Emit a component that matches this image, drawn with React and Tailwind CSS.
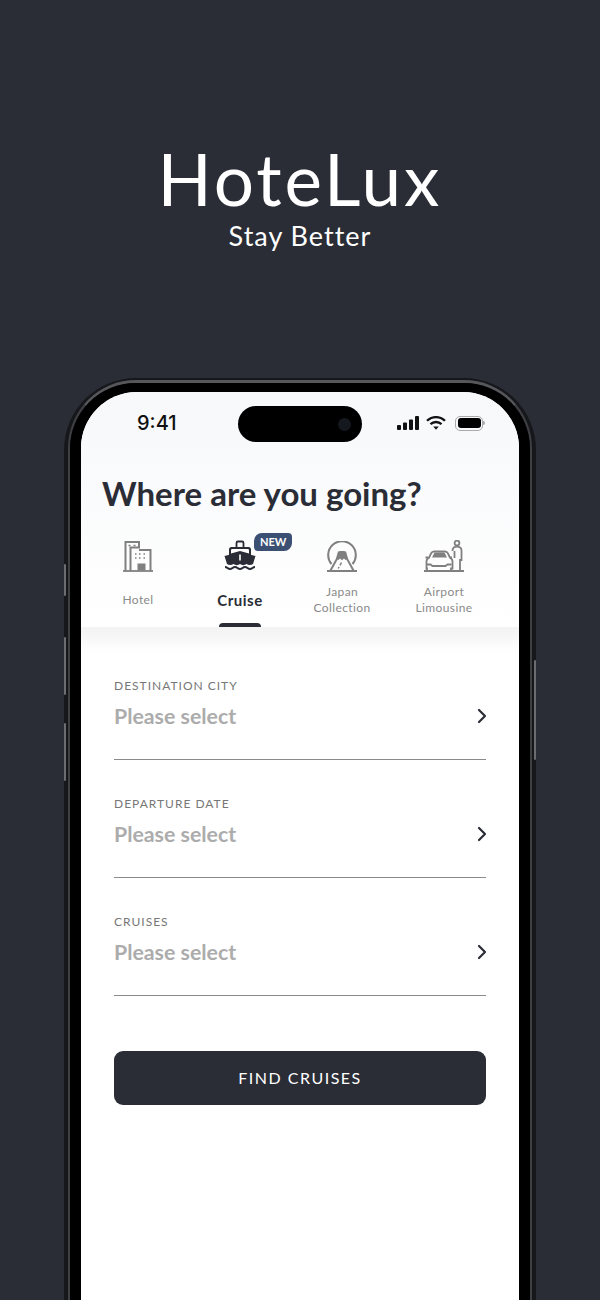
import React from 'react';
import { ChevronRight } from 'lucide-react';

const HotelIcon = () => (
  <svg width="30" height="31" viewBox="0 0 30 31" fill="none" stroke="#808080" strokeWidth="2">
    <path d="M2.500 30V1h13.500v5.500H7.500V30" />
    <path d="M16 9h11.500v21" />
    <path d="M0 30h30" strokeWidth="1.800" />
    <path d="M5.500 4.500h2M10.500 4.500h2M12 13h1.500M16 13h1.500M20.500 13h1.500M12 17h1.500M16 17h1.500M20.500 17h1.500" strokeWidth="1.700" />
    <rect x="14.500" y="22.500" width="8" height="7" fill="#808080" stroke="none" />
  </svg>
);

const CruiseIcon = () => (
  <svg width="32" height="32" viewBox="0 0 32 32" fill="none">
    <path d="M12.500 7V3a1.500 1.500 0 0 1 1.500-1.500h4A1.500 1.500 0 0 1 19.500 3v4" stroke="#2a2d36" strokeWidth="1.800" />
    <path d="M5 16V9.500A2.500 2.500 0 0 1 7.500 7h17A2.500 2.500 0 0 1 27 9.500V16z" fill="#2a2d36" />
    <path d="M7 13.500V10.300a1.300 1.300 0 0 1 1.300-1.300h15.400a1.300 1.300 0 0 1 1.300 1.300v3.200L16 11z" fill="#fff" />
    <path d="M0.500 16 16 12l15.500 4-2.500 8c-2 1.400-4.500 1.400-6.500 0-2 1.500-4.500 1.500-6.500 0-2 1.500-4.500 1.500-6.500 0-2 1.400-4.500 1.400-6.500 0z" fill="#2a2d36" />
    <path d="M16 14.500v6" stroke="#fff" strokeWidth="1.600" />
    <path d="M1 27c2.500 0 2.500 2 5 2S8.500 27 11 27s2.500 2 5 2 2.500-2 5-2 2.500 2 5 2 2.500-2 5-2" stroke="#2a2d36" strokeWidth="2" />
  </svg>
);

const FujiIcon = () => (
  <svg width="30" height="31" viewBox="0 0 30 31" fill="none" stroke="#808080" strokeWidth="2">
    <path d="M4.500 23A13.800 13.800 0 1 1 25.500 23" />
    <path d="M0 30h30" />
    <path d="M3.500 29.500 11 16l1-4a1.500 1.500 0 0 1 1.400-1h3.200a1.500 1.500 0 0 1 1.400 1l1 4 7.500 13.500" />
    <path d="M11 10.500h8l2 7-2.500 1.500-1.500-1.500-2 1.800-2-1.800-1.500 1.500L9 17.500z" fill="#808080" stroke="none" />
    <path d="M14.500 21.500l-1.500 2.800M12 26l-.8 1.500" strokeWidth="1.500" />
  </svg>
);

const LimoIcon = () => (
  <svg width="40" height="32" viewBox="0 0 40 32" fill="none" stroke="#808080" strokeWidth="1.800">
    <path d="M0 31h40" />
    <path d="M3 31v-2.500H2.500V21.500c0-2 1-3 2.500-3.700l2-4.300c.6-1.300 1.500-2 3-2h11c1.500 0 2.400.7 3 2l2 4.300c1.500.7 2.500 1.700 2.500 3.700v7H27V31" />
    <path d="M2.500 24.500h4l2 1.500h13l2-1.500h4M4.500 17.500H1.500M26 17.500h2" />
    <path d="M8 17.500l2-4c.3-.7.700-1 1.500-1h8c.8 0 1.200.3 1.500 1l2 4z" fill="#808080" stroke="none" />
    <circle cx="33" cy="3" r="2.400" />
    <path d="M28.500 11c0-3 1.500-4.300 4.500-4.300s4.500 1 4.500 3.800v9.500H36V31M30.500 18V11" />
  </svg>
);

const TABS = [
  { key: 'hotel', label: ['Hotel'], icon: <HotelIcon /> },
  { key: 'cruise', label: ['Cruise'], icon: <CruiseIcon />, active: true },
  { key: 'japan', label: ['Japan', 'Collection'], icon: <FujiIcon /> },
  { key: 'limo', label: ['Airport', 'Limousine'], icon: <LimoIcon /> }
];

const FIELDS = ['DESTINATION CITY', 'DEPARTURE DATE', 'CRUISES'];

const StatusIcons = () => (
  <div className="flex items-center gap-[6px]">
    <svg width="23" height="14" viewBox="0 0 23 14" fill="#111">
      <rect x="0" y="9" width="4" height="5" rx="1" />
      <rect x="6" y="6.500" width="4" height="7.500" rx="1" />
      <rect x="12" y="3.500" width="4" height="10.500" rx="1" />
      <rect x="18" y="0" width="4" height="14" rx="1" />
    </svg>
    <svg width="20" height="14" viewBox="0 0 20 14" fill="none" stroke="#111" strokeWidth="2.300">
      <path d="M1 4.800a12.800 12.800 0 0 1 18 0" />
      <path d="M4.500 8.200a8 8 0 0 1 11 0" />
      <path d="M7.200 10.400h5.600L10 13.800z" fill="#111" stroke="none" />
    </svg>
    <div className="ml-[3px] flex items-center">
      <div className="h-[15px] w-[28px] rounded-[5px] border border-[#aaa] p-[1.500px]">
        <div className="h-full w-full rounded-[3px] bg-black" />
      </div>
      <div className="h-[4px] w-[2px] rounded-r-sm bg-[#aaa]" />
    </div>
  </div>
);

const App = () => {
  return (
    <div className="relative flex h-[1300px] w-[600px] flex-col items-center overflow-hidden bg-[#2a2d36] font-['Lato',sans-serif]">
      {/* Logo */}
      <div className="flex h-[378px] flex-col items-center pt-[137px]">
        <div className="text-[71px] leading-[84px] font-normal tracking-[3px] text-white">HoteLux</div>
        <div className="-mt-[3px] text-[27px] leading-[36px] tracking-[1px] text-white">Stay Better</div>
      </div>

      {/* Phone */}
      <div className="relative h-[922px] w-[472px] rounded-t-[72px] bg-[#15171b] px-[4px] pt-[2px]">
        {/* side buttons */}
        <div className="absolute top-[186px] left-0 h-[32px] w-[2px] rounded-full bg-[#6b6d71]" />
        <div className="absolute top-[259px] left-0 h-[58px] w-[2px] rounded-full bg-[#6b6d71]" />
        <div className="absolute top-[345px] left-0 h-[58px] w-[2px] rounded-full bg-[#6b6d71]" />
        <div className="absolute top-[282px] right-0 h-[100px] w-[2px] rounded-full bg-[#6b6d71]" />

        <div className="h-full rounded-t-[68px] border-x-[2px] border-t-[3px] border-b-0 border-x-[#3d3f43] border-t-[#55575b]">
          <div className="h-full rounded-t-[66px] bg-black px-[11px] pt-[9px]">
            <div className="flex h-full flex-col overflow-hidden rounded-t-[56px] bg-white">
              {/* Top panel */}
              <div className="relative z-10 h-[235px] bg-gradient-to-b from-[#f7f8fa] to-white shadow-[0_6px_16px_8px_rgba(0,0,0,0.05)]">
                <div className="relative flex h-[62px] items-center justify-between pr-[34px] pl-[56px]">
                  <span className="font-['Inter',sans-serif] text-[20px] font-medium text-[#111]">9:41</span>
                  <div className="absolute top-[14px] left-[157px] flex h-[36px] w-[124px] items-center justify-end rounded-full bg-black pr-[11px]">
                    <div className="h-[13px] w-[13px] rounded-full bg-[#15181f]" />
                  </div>
                  <StatusIcons />
                </div>
                <h1 className="mt-[16px] pl-[21px] text-[33px] leading-[46px] font-bold text-[#2a2d36]">Where are you going?</h1>
                <div className="mt-[21px] grid grid-cols-[102px_102px_102px_102px] pl-[6px]">
                  {TABS.map(tab => (
                    <div key={tab.key} className="relative flex h-[90px] flex-col items-center">
                      <div className="flex h-[35px] items-end">{tab.icon}</div>
                      <div className="flex flex-1 flex-col items-center justify-center">
                        {tab.label.map(line => (
                          <span
                            key={line}
                            className={tab.active
                              ? 'text-[15px] leading-[18px] font-bold tracking-[0.5px] text-[#2a2d36]'
                              : 'text-[12px] leading-[16px] tracking-[0.4px] text-[#8a8a8a]'}
                          >
                            {line}
                          </span>
                        ))}
                      </div>
                      {tab.active && (
                        <>
                          <div className="absolute bottom-0 left-[30px] h-[4px] w-[42px] rounded-t-[4px] bg-[#2a2d36]" />
                          <div className="absolute -top-[4px] left-[65px] rounded-tl-[8px] rounded-tr-[4px] rounded-br-[8px] rounded-bl-[4px] bg-[#3c5074] px-[6px] py-[2px] text-[11px] leading-[14px] font-bold text-white">NEW</div>
                        </>
                      )}
                    </div>
                  ))}
                </div>
              </div>

              {/* Form */}
              <div className="flex flex-col px-[33px] pt-[50px]">
                {FIELDS.map(field => (
                  <div key={field} className="mb-[35px] h-[83px] border-b border-[#8a8a8a]">
                    <div className="text-[12px] leading-[18px] tracking-[1px] text-[#777]">{field}</div>
                    <div className="mt-[4px] flex h-[36px] items-center justify-between">
                      <span className="text-[21.300px] font-bold text-[#acacac]">Please select</span>
                      <ChevronRight size={24} strokeWidth={2.200} className="-mt-[2px] -mr-[8px] text-[#2a2d36]" />
                    </div>
                  </div>
                ))}
                <button className="mt-[20px] h-[54px] rounded-[9px] bg-[#2a2d36] text-[16px] tracking-[1.500px] text-white">FIND CRUISES</button>
              </div>
            </div>
          </div>
        </div>
      </div>
    </div>
  );
};

export default App;
